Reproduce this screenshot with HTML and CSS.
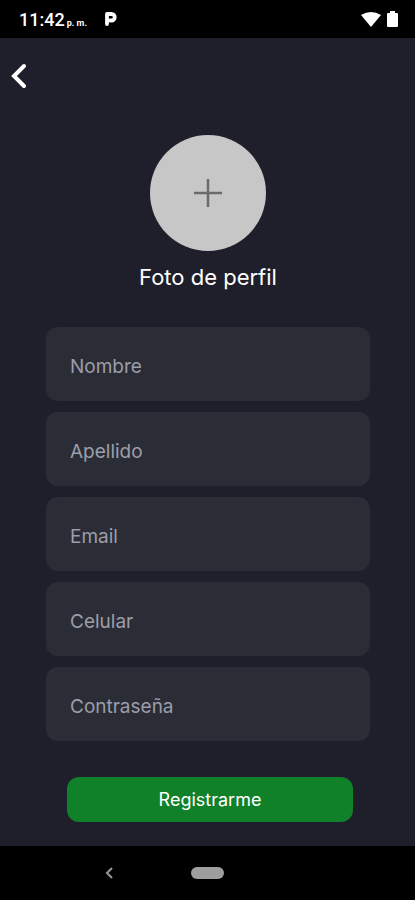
FILE: index.html
```
<!DOCTYPE html>
<html lang="es">
<head>
    <meta charset="UTF-8">
    <meta name="viewport" content="width=device-width, initial-scale=1.0">
    <title>Registro</title>
    <link rel="stylesheet" href="styles.css">
</head>
<body>
    <div class="status-bar">
        <div class="clock">11:42<span class="period">p. m.</span></div>
        <svg class="app-icon" width="12" height="14" viewBox="0 0 12 14" aria-hidden="true">
            <path d="M2 12V2h4.500a2.800 2.800 0 0 1 0 6.500H5" fill="none" stroke="#fff" stroke-width="3.800" stroke-linecap="round" stroke-linejoin="round"/>
        </svg>
        <div class="status-icons">
            <svg width="20" height="15" viewBox="0 0 20 15" aria-hidden="true">
                <path d="M0 3Q10-3 20 3L10 15z" fill="#fff"/>
            </svg>
            <svg width="11" height="16" viewBox="0 0 11 16" aria-hidden="true">
                <path d="M3 0h5v2h2q1 0 1 1v12q0 1-1 1H1q-1 0-1-1V3q0-1 1-1h2z" fill="#fff"/>
            </svg>
        </div>
    </div>

    <header class="header">
        <button type="button" class="back" aria-label="Volver">
            <svg width="16" height="26" viewBox="0 0 16 26">
                <path d="M13 3L3 13l10 10" fill="none" stroke="#fff" stroke-width="4" stroke-linecap="round"/>
            </svg>
        </button>
    </header>

    <main class="content">
        <div class="photo">
            <button type="button" class="avatar" aria-labelledby="photo-text">
                <svg width="30" height="30" viewBox="0 0 30 30">
                    <path d="M15 1v28M1 15h28" fill="none" stroke="#6b6b6b" stroke-width="2.500"/>
                </svg>
            </button>
            <span class="photo-text" id="photo-text">Foto de perfil</span>
        </div>

        <form class="form">
            <input class="field" type="text" name="nombre" placeholder="Nombre" aria-label="Nombre">
            <input class="field" type="text" name="apellido" placeholder="Apellido" aria-label="Apellido">
            <input class="field" type="email" name="email" placeholder="Email" aria-label="Email">
            <input class="field" type="tel" name="celular" placeholder="Celular" aria-label="Celular">
            <input class="field" type="password" name="contrasena" placeholder="Contraseña" aria-label="Contraseña">
            <button type="submit" class="submit">Registrarme</button>
        </form>
    </main>

    <nav class="nav-bar">
        <button type="button" class="nav-button" aria-label="Atrás">
            <svg width="9" height="14" viewBox="0 0 9 14">
                <path d="M7 2L2 7l5 5" fill="none" stroke="#999" stroke-width="2"/>
            </svg>
        </button>
        <button type="button" class="home" aria-label="Inicio"></button>
    </nav>
</body>
</html>
```

FILE: styles.css
```
* {
    box-sizing: border-box;
}
body {
    margin: 0;
    min-height: 100vh;
    display: flex;
    flex-direction: column;
    background-color: #1f1f2b;
    color: #fff;
    font-family: Inter, "Open Sans", sans-serif;
}
button {
    padding: 0;
    border: none;
    background: none;
    color: inherit;
    font-family: inherit;
    cursor: pointer;
}
svg {
    display: block;
}
.status-bar {
    display: flex;
    align-items: center;
    height: 38px;
    padding: 0 17px 0 19px;
    background-color: #000;
    font-family: Roboto, sans-serif;
}
.clock {
    font-size: 18px;
    font-weight: 500;
}
.period {
    font-size: 9px;
    font-weight: 700;
    margin-left: 2px;
}
.app-icon {
    margin-left: 18px;
}
.status-icons {
    display: flex;
    align-items: center;
    gap: 6px;
    margin-left: auto;
}
.header {
    display: flex;
    align-items: center;
    height: 76px;
    padding: 0 11px;
}
.content {
    flex: 1;
    padding: 21px 45px 24px 46px;
}
.photo {
    display: flex;
    flex-direction: column;
    align-items: center;
    gap: 12px;
}
.avatar {
    display: flex;
    align-items: center;
    justify-content: center;
    width: 116px;
    height: 116px;
    border-radius: 50%;
    background-color: #c7c7c7;
}
.photo-text {
    font-size: 22px;
    line-height: 28px;
}
.form {
    display: flex;
    flex-direction: column;
    gap: 11px;
    margin-top: 36px;
}
.field {
    width: 100%;
    height: 74px;
    padding: 4px 24px 0;
    border: none;
    border-radius: 12px;
    background-color: #2b2d36;
    color: #fff;
    font-family: inherit;
    font-size: 19px;
}
.field::placeholder {
    color: #9c9da9;
    opacity: 1;
}
.submit {
    height: 45px;
    margin: 25px 17px 0 21px;
    border-radius: 12px;
    background-color: #118129;
    font-size: 18px;
}
.nav-bar {
    display: grid;
    grid-template-columns: 1fr auto 1fr;
    align-items: center;
    height: 54px;
    background-color: #000;
}
.nav-button {
    justify-self: center;
    margin-left: 28px;
}
.home {
    width: 33px;
    height: 12px;
    border-radius: 6px;
    background-color: #9e9e9e;
}
```
